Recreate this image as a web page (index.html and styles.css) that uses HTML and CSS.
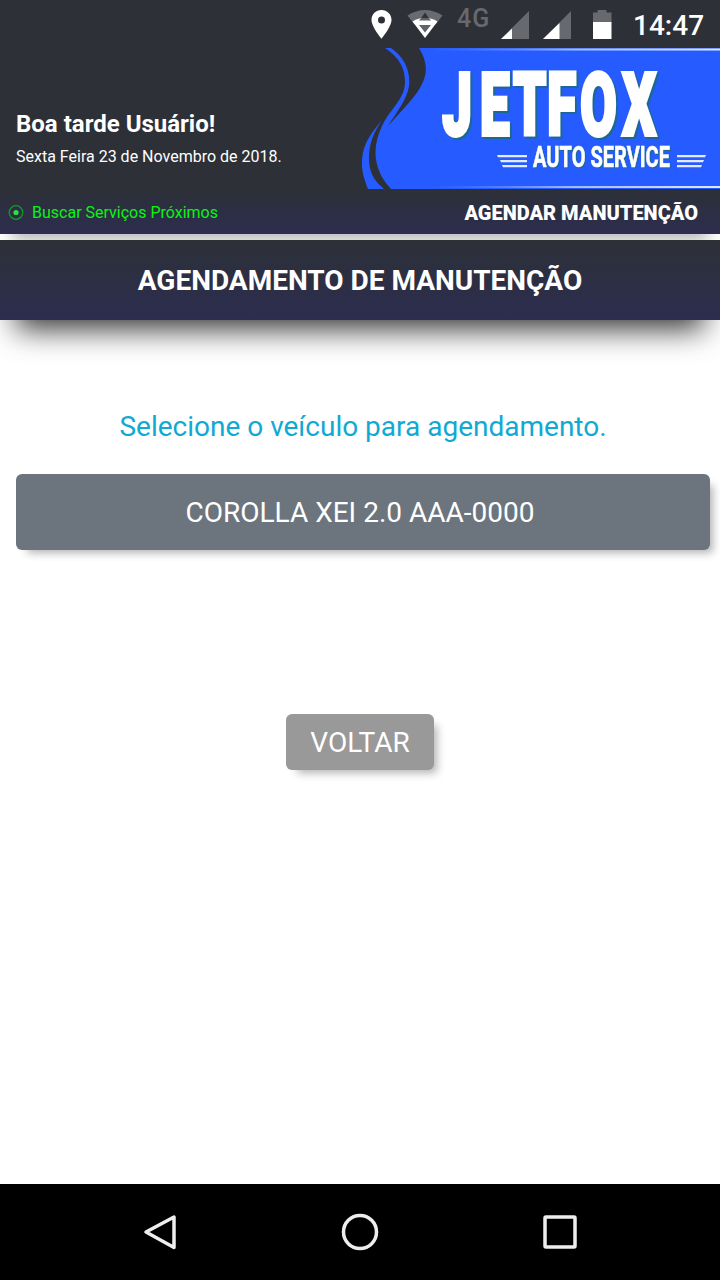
FILE: index.html
```html
<!DOCTYPE html>
<html lang="pt-br">
<head>
  <meta charset="UTF-8">
  <meta name="viewport" content="width=device-width, initial-scale=1.0">
  <title>Agendamento de Manutenção</title>
  <link rel="stylesheet" href="styles.css">
</head>
<body>
  <div class="status-bar">
    <svg class="status-icons" viewBox="360 0 260 48">
      <path fill="#fff" fill-rule="evenodd" d="M381.500 10c-5.700 0-10 4.400-10 9.800 0 7.300 10 18.900 10 18.900s10-11.600 10-18.900c0-5.400-4.300-9.800-10-9.800zm0 6.500a3.500 3.500 0 1 1 0 7 3.500 3.500 0 0 1 0-7z"/>
      <path fill="#696b70" d="M407.500 15.500Q425 4.500 442.500 15.500L436 24Q425 16 414 24z"/>
      <path fill="#fff" d="M412.500 21.500Q425 14 437.500 21.500L425 38z"/>
      <path fill="#303238" d="M425 12.500l4 6h-8z"/>
      <path fill="#606268" d="M421 18h8l2 2.500h-12zM419 25h12l-6 7.500z"/>
      <text class="network" x="457" y="27">4G</text>
      <path fill="#67696e" d="M529 11v28h-28z"/>
      <path fill="#fff" d="M512 28.500V39h-11z"/>
      <path fill="#67696e" d="M571 11v28h-28z"/>
      <path fill="#fff" d="M559.500 23v16H543z"/>
      <path fill="#67696e" d="M593 12.500h4.500V10h9v2.500h5V23H593z"/>
      <path fill="#fff" d="M593 22h18.500v17H593z"/>
    </svg>
    <span class="clock">14:47</span>
  </div>

  <header class="header">
    <div class="greeting">
      <h1>Boa tarde Usuário!</h1>
      <p>Sexta Feira 23 de Novembro de 2018.</p>
    </div>
    <svg class="logo" viewBox="360 48 360 141">
      <defs>
        <linearGradient id="line" x1="430" x2="720" y1="0" y2="0" gradientUnits="userSpaceOnUse">
          <stop offset="0" stop-color="#6d92f8" stop-opacity="0"/>
          <stop offset=".5" stop-color="#a5bbf8"/>
          <stop offset="1" stop-color="#dfe7ff"/>
        </linearGradient>
      </defs>
      <path fill="#265cff" d="M720 48H419C427 61 428 72 422 84C416 97 401 111 388 126C397 112 407 99 409 86C411 70 403 56 391 48H385C399 57 405 68 405 82C405 99 390 109 382 126C371 149 374 171 391 189H720z"/>
      <path fill="#265cff" d="M382 120C372 132 363 143 362 160C361 171 365 181 368 189H384C373 180 369 171 369 158C369 143 374 132 382 120z"/>
      <path fill="url(#line)" d="M430 48.500h290v2H430zM400 186h320v2H400z"/>
      <g class="logo-name">
        <text transform="translate(441 135) scale(.6 1)" x="2 65 120 177 232 302">JETFOX</text>
      </g>
      <g class="logo-service">
        <text x="533" y="166.500" textLength="137" lengthAdjust="spacingAndGlyphs">AUTO SERVICE</text>
      </g>
      <path fill="#e4edff" d="M497 155h30v2.200h-29zM500 160h27v2.200h-26zM502 165h25v2.200h-24zM677 155h29l-1 2.200h-28zM677 160h27l-1 2.200h-26zM677 165h25l-1 2.200h-24z"/>
    </svg>
  </header>

  <nav class="links">
    <a class="search">
      <svg width="16" height="16" viewBox="0 0 16 16">
        <circle cx="8" cy="7.500" r="6.800" fill="none" stroke="#159a27" stroke-width="1.300"/>
        <circle cx="8" cy="7.500" r="2.600" fill="#2be046"/>
      </svg>
      Buscar Serviços Próximos
    </a>
    <a class="schedule">AGENDAR MANUTENÇÃO</a>
  </nav>

  <h2 class="page-title">AGENDAMENTO DE MANUTENÇÃO</h2>

  <main class="content">
    <p class="message">Selecione o veículo para agendamento.</p>
    <button class="btn vehicle">COROLLA XEI 2.0 AAA-0000</button>
    <button class="btn back">VOLTAR</button>
  </main>

  <footer class="nav-bar">
    <svg width="40" height="40" viewBox="0 0 40 40"><path d="M34 5v30.500L6 20z"/></svg>
    <svg width="40" height="40" viewBox="0 0 40 40"><circle cx="20" cy="20" r="16.500"/></svg>
    <svg width="40" height="40" viewBox="0 0 40 40"><rect x="5" y="5" width="30" height="30" rx="1"/></svg>
  </footer>
</body>
</html>
```

FILE: styles.css
```css
* {
  box-sizing: border-box;
}

body {
  margin: 0;
  height: 1280px;
  display: flex;
  flex-direction: column;
  background: #fff;
  color: #fff;
  font-family: Roboto, sans-serif;
}

h1, h2, p {
  margin: 0;
}

/* Android status bar */
.status-bar {
  display: flex;
  align-items: center;
  height: 48px;
  padding-left: 360px;
  background: #2d3037;
}

.status-icons {
  width: 260px;
  height: 48px;
}

.network {
  font-size: 25px;
  font-weight: 500;
  letter-spacing: 1px;
  fill: #67696e;
}

.clock {
  margin: 2px 0 0 13px;
  font-size: 28px;
  font-weight: 500;
}

/* Header */
.header {
  display: flex;
  justify-content: space-between;
  height: 141px;
  background: #2d3037;
}

.greeting {
  padding: 62px 0 0 16px;
  white-space: nowrap;
}

.greeting h1 {
  font-size: 24px;
  font-weight: 700;
  line-height: 29px;
}

.greeting p {
  margin-top: 8px;
  font-size: 16px;
  line-height: 19px;
}

.logo {
  width: 360px;
  height: 141px;
}

.logo text {
  fill: #fff;
  stroke: #fff;
}

.logo-name {
  font-size: 88px;
  font-weight: 900;
  stroke-width: 4px;
  filter: drop-shadow(2px 2px 0 #1c6796);
}

.logo-service {
  font-size: 30px;
  font-weight: 700;
  stroke-width: 0.6px;
  filter: drop-shadow(1px 1px 0 #1c6796);
}

.links {
  display: flex;
  justify-content: space-between;
  align-items: center;
  height: 45px;
  padding: 2px 22px 0 8px;
  background: linear-gradient(#2d3037, #2c2d50);
  box-shadow: 0 18px 16px -12px rgba(0, 0, 0, 0.3);
}

.search {
  display: flex;
  align-items: center;
  gap: 8px;
  font-size: 16px;
  color: #08f50f;
}

.schedule {
  padding-top: 1px;
  font-size: 20px;
  font-weight: 900;
}

.page-title {
  height: 80px;
  margin-top: 6px;
  background: linear-gradient(#2d3037, #2c2d50);
  box-shadow: 0 25px 30px -16px rgba(0, 0, 0, 0.8);
  font-size: 28px;
  font-weight: 700;
  line-height: 81px;
  text-align: center;
}

/* Content */
.content {
  flex: 1;
  display: flex;
  flex-direction: column;
  padding: 88px 10px 0 16px;
}

.message {
  font-size: 28px;
  line-height: 38px;
  text-align: center;
  color: #10a9d3;
}

.btn {
  border: none;
  border-radius: 6px;
  color: #fff;
  font-family: inherit;
  font-size: 28px;
  box-shadow: 7px 7px 8px -4px rgba(0, 0, 0, 0.3);
}

.vehicle {
  height: 76px;
  margin-top: 28px;
  padding: 0 6px 0 0;
  background: #6c757d;
}

.back {
  align-self: center;
  width: 148px;
  height: 56px;
  margin: 164px 6px 0 0;
  padding: 0;
  background: #999;
}

/* Android navigation bar */
.nav-bar {
  display: flex;
  justify-content: space-between;
  align-items: center;
  height: 96px;
  padding: 0 140px;
  background: #000;
}

.nav-bar svg {
  fill: none;
  stroke: #eee;
  stroke-width: 3.5;
  stroke-linejoin: round;
}
```
